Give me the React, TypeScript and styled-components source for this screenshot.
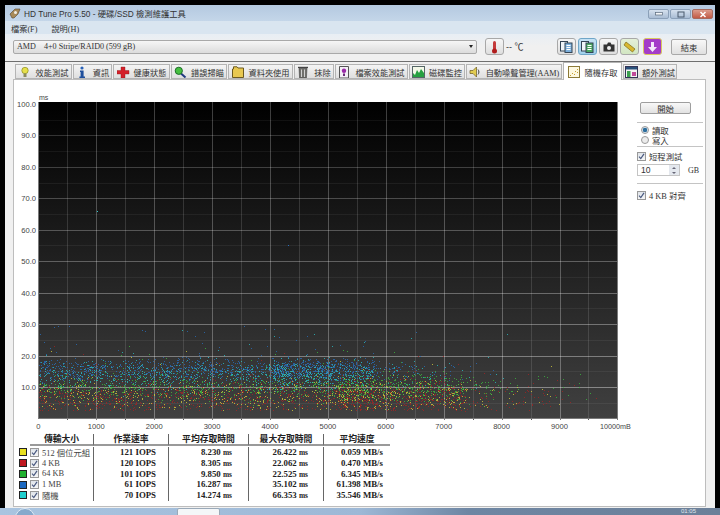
import React from 'react'
import styled, { createGlobalStyle } from 'styled-components'

const SANS = `"Liberation Sans", "Noto Sans CJK TC", sans-serif`
const SERIF = `"Liberation Serif", "Noto Sans CJK TC", serif`

const GlobalStyle = createGlobalStyle`
  html, body { margin: 0; padding: 0; background: #000; }
  body { font-family: ${SERIF}; }
`

const Screen = styled.div`
  width: 720px;
  height: 515px;
  overflow: hidden;
  display: flex;
  flex-direction: column;
  background: #000;
`
const WindowFrame = styled.div`
  height: 503px;
  margin: 5px 5px 0 5px;
  display: flex;
  flex-direction: column;
  background: #f0f0f0;
`
const TitleBar = styled.div`
  height: 16px;
  display: flex;
  align-items: center;
  padding-left: 4px;
  background: linear-gradient(#b4c9e0, #c4d6e9);
  font: 8.3px ${SANS};
  color: #333;
`
const TitleText = styled.span`
  margin-left: 3px;
  flex: 1;
`
const WindowButtons = styled.div`
  display: flex;
  gap: 1px;
  margin-right: 2px;
  margin-top: 2px;
`
const WindowButton = styled.div<{ $close?: boolean }>`
  width: 21px;
  height: 10px;
  display: flex;
  align-items: center;
  justify-content: center;
  border: 1px solid ${(p) => (p.$close ? '#a56a5e' : '#8ba0b8')};
  border-radius: 2px;
  box-sizing: border-box;
  background: ${(p) =>
    p.$close
      ? 'linear-gradient(#dc9c8c, #c25a45)'
      : 'linear-gradient(#d5e1ee, #a9bdd4)'};
`
const MenuBar = styled.div`
  height: 13px;
  display: flex;
  align-items: center;
  gap: 14px;
  padding-left: 6px;
  background: #d9e5f0;
  font: 8.2px ${SERIF};
  color: #333;
`
const Toolbar = styled.div`
  height: 28px;
  box-sizing: border-box;
  display: flex;
  align-items: center;
  padding: 0 0 2px 8px;
  border-bottom: 1px solid #6f6f6f;
  background: linear-gradient(#e8eef4, #f0f0f0 45%);
`
const Combo = styled.div`
  width: 464px;
  height: 14px;
  flex: none;
  box-sizing: border-box;
  display: flex;
  align-items: center;
  justify-content: space-between;
  padding: 0 3px;
  border: 1px solid #a9a9a9;
  border-radius: 2px;
  background: linear-gradient(#f6f6f6, #dcdcdc);
  font: 8.1px ${SERIF};
  color: #333;
  white-space: pre;
`
const ComboArrow = styled.div`
  width: 0;
  height: 0;
  border-left: 2.5px solid transparent;
  border-right: 2.5px solid transparent;
  border-top: 3px solid #222;
`
const ToolButton = styled.div<{ $bg?: string; $gapLeft?: number; $line?: string }>`
  width: 19px;
  height: 17px;
  margin-left: ${(p) => p.$gapLeft ?? 0}px;
  box-sizing: border-box;
  flex: none;
  display: flex;
  align-items: center;
  justify-content: center;
  border: 1px solid ${(p) => p.$line ?? '#a8a8a8'};
  border-radius: 3px;
  background: ${(p) => p.$bg ?? 'linear-gradient(#f6f6f6, #dedede)'};
`
const Temperature = styled.span`
  width: 51px;
  flex: none;
  margin-left: 2px;
  font: 9px ${SANS};
  color: #333;
`
const ToolGroup = styled.div`
  display: flex;
  flex: none;
  gap: 2px;
`
const ExitButton = styled.div`
  width: 36px;
  height: 16px;
  flex: none;
  margin-left: 9px;
  box-sizing: border-box;
  display: flex;
  align-items: center;
  justify-content: center;
  border: 1px solid #a8a8a8;
  border-radius: 2px;
  background: linear-gradient(#f8f8f8, #e0e0e0);
  font: 8.4px ${SERIF};
  color: #333;
`
const TabStrip = styled.div`
  height: 17px;
  display: flex;
  align-items: flex-end;
  gap: 1px;
  padding-left: 10px;
  position: relative;
  z-index: 1;
`
const Tab = styled.div<{ $w: number; $active?: boolean }>`
  width: ${(p) => p.$w}px;
  height: ${(p) => (p.$active ? 18 : 15)}px;
  margin-bottom: ${(p) => (p.$active ? -1 : 0)}px;
  box-sizing: border-box;
  display: flex;
  align-items: center;
  justify-content: center;
  gap: 4px;
  border: 1px solid #b4b4b4;
  border-bottom: ${(p) => (p.$active ? 'none' : '1px solid #b4b4b4')};
  background: ${(p) => (p.$active ? '#fff' : 'linear-gradient(#f4f4f4, #dfdfdf)')};
  font: 8.2px ${SERIF};
  color: #333;
  white-space: nowrap;
`
const Panel = styled.div`
  height: 428px;
  margin: 0 9px 0 8px;
  box-sizing: border-box;
  display: flex;
  border: 1px solid #bdbdbd;
  background: #fff;
`
const MainColumn = styled.div`
  width: 622px;
  flex: none;
  padding-top: 10px;
`
const ChartSvg = styled.svg`
  display: block;
`
const ResultsTable = styled.div`
  display: grid;
  grid-template-columns: 16px 63px 75px 80px 75px 67px;
  grid-template-rows: 12px 1px repeat(5, 10.75px);
  font: bold 8.8px ${SERIF};
  color: #222;
`
const HeaderCell = styled.div<{ $first?: boolean }>`
  box-sizing: border-box;
  text-align: center;
  line-height: 9px;
  padding-top: 1px;
  border-bottom: 2px solid #9a9a9a;
  border-left: ${(p) => (p.$first ? 'none' : '1px solid #666')};
`
const HeaderGap = styled.div`
  grid-column: 1 / -1;
`
const SwatchCell = styled.div`
  display: flex;
  align-items: center;
  justify-content: center;
  padding-left: 1px;
`
const Swatch = styled.div<{ $c: string }>`
  width: 6px;
  height: 6px;
  border: 1px solid #222;
  background: ${(p) => p.$c};
`
const NameCell = styled.div`
  display: flex;
  align-items: center;
  gap: 3px;
  font: 8.4px ${SERIF};
  color: #444;
  white-space: nowrap;
`
const ValueCell = styled.div<{ $pad: number }>`
  text-align: right;
  line-height: 10.75px;
  padding-right: ${(p) => p.$pad}px;
  border-left: 1px solid #666;
  white-space: nowrap;
`
const Unit = styled.span`
  font-size: 7.4px;
`
const CheckBox = styled.div`
  width: 9px;
  height: 9px;
  flex: none;
  box-sizing: border-box;
  display: flex;
  align-items: center;
  justify-content: center;
  border: 1px solid #999;
  background: linear-gradient(#dfe4ea, #f6f6f6);
`
const SideColumn = styled.div`
  width: 66px;
  margin-left: 1px;
  padding-top: 22px;
  display: flex;
  flex-direction: column;
  font: 8.4px ${SERIF};
  color: #333;
`
const StartButton = styled.div`
  width: 51px;
  height: 12px;
  margin-left: 3px;
  box-sizing: border-box;
  display: flex;
  align-items: center;
  justify-content: center;
  border: 1px solid #9e9e9e;
  border-radius: 2px;
  background: linear-gradient(#f8f8f8, #e2e2e2);
`
const Divider = styled.div<{ $top: number; $bottom: number }>`
  height: 1px;
  margin: ${(p) => p.$top}px 0 ${(p) => p.$bottom}px;
  background: #c4c4c4;
`
const OptionRow = styled.div<{ $indent?: number }>`
  height: 10px;
  display: flex;
  align-items: center;
  gap: 3px;
  padding-left: ${(p) => p.$indent ?? 0}px;
  white-space: nowrap;
`
const Radio = styled.div<{ $on?: boolean }>`
  width: 8px;
  height: 8px;
  flex: none;
  box-sizing: border-box;
  border-radius: 50%;
  border: 1px solid #9a9a9a;
  background: ${(p) => (p.$on ? 'radial-gradient(#2d6f9e 45%, #d5e0ea 60%)' : '#ececec')};
`
const SpinRow = styled.div`
  display: flex;
  align-items: center;
  margin-top: 3px;
`
const SpinInput = styled.div`
  width: 43px;
  height: 12px;
  box-sizing: border-box;
  display: flex;
  align-items: center;
  justify-content: space-between;
  padding-left: 3px;
  border: 1px solid #c4c4c4;
  font: 8.6px ${SANS};
`
const SpinArrows = styled.div`
  width: 10px;
  height: 10px;
  display: flex;
  flex-direction: column;
  align-items: center;
  justify-content: space-around;
  background: #e4e8ee;
`
const SpinArrow = styled.div<{ $down?: boolean }>`
  width: 0;
  height: 0;
  border-left: 2px solid transparent;
  border-right: 2px solid transparent;
  border-${(p) => (p.$down ? 'top' : 'bottom')}: 2px solid #667;
`
const SpinUnit = styled.span`
  margin-left: 8px;
  font: 8px ${SERIF};
`
const Taskbar = styled.div`
  flex: 1;
  display: flex;
  align-items: flex-start;
  overflow: hidden;
  background: linear-gradient(90deg, #a9c4e0, #9db8d6 50%, #6e86a3 65%, #6c8099);
`
const StartOrb = styled.div`
  width: 18px;
  height: 18px;
  margin: 0 0 0 15px;
  flex: none;
  border: 1px solid #dfe9f3;
  border-radius: 50%;
  background: #86a9cc;
`
const ActiveTask = styled.div`
  width: 41px;
  height: 20px;
  margin-left: 142px;
  flex: none;
  border: 1px solid #9aa9b8;
  border-radius: 2px;
  background: #f4f6f8;
`
const Clock = styled.span`
  margin-left: auto;
  margin-right: 24px;
  font: 6px/7px ${SANS};
  color: #e2e8ee;
`

// Plain seeded generator so the scatter is the same every time
const makeRandom = (seed: number) => () => {
  seed = (seed * 1664525 + 1013904223) % 4294967296
  return seed / 4294967296
}

const plot = { x: 24.4, y: 12, w: 579 }
const toX = (mb: number) => plot.x + (mb / 10000) * plot.w
const toY = (ms: number) => 328.4 - ms * 3.144

type Series = {
  color: string
  mean: number
  spread: number
  count: number
  maxMb: number
  tailMb: number
}

const seriesList: Series[] = [
  { color: '#a82024', mean: 7, spread: 2.8, count: 1500, maxMb: 7400, tailMb: 9800 },
  { color: '#d8d23a', mean: 7.4, spread: 2.6, count: 750, maxMb: 7400, tailMb: 9800 },
  { color: '#38c03c', mean: 9.8, spread: 2.2, count: 1100, maxMb: 7400, tailMb: 9800 },
  { color: '#2a70c0', mean: 15.6, spread: 1.8, count: 1300, maxMb: 5800, tailMb: 8600 },
  { color: '#2ac4c8', mean: 13.8, spread: 2.2, count: 900, maxMb: 5800, tailMb: 8600 },
]

const dotPath = (s: Series, seed: number) => {
  const rnd = makeRandom(seed)
  const parts: string[] = []
  for (let i = 0; i < s.count; i++) {
    // most dots sit evenly, the rest thin out towards the tail
    const start = s.maxMb * 0.7
    const mb = rnd() < 0.78 ? rnd() * s.maxMb : start + rnd() * rnd() * (s.tailMb - start)
    let ms = s.mean + (rnd() + rnd() + rnd() + rnd() - 2) * s.spread * 1.7
    if (rnd() < 0.03) ms += rnd() * 14
    if (ms < 2.5) ms = 2.5 + rnd() * 3
    parts.push(`M${Math.round(toX(mb))} ${Math.round(toY(ms))}h1v1h-1z`)
  }
  return parts.join('')
}

const yLabels = [100, 90, 80, 70, 60, 50, 40, 30, 20, 10]
const xLabels = [0, 1000, 2000, 3000, 4000, 5000, 6000, 7000, 8000, 9000]

const ScatterChart = () => (
  <ChartSvg width={622} height={344}>
    <defs>
      <linearGradient id="plotFill" x1="0" y1="0" x2="0" y2="1">
        <stop offset="0" stopColor="#000" />
        <stop offset="1" stopColor="#404040" />
      </linearGradient>
      <linearGradient id="gridMajor" gradientUnits="userSpaceOnUse" x1="0" y1="12" x2="0" y2="330">
        <stop offset="0" stopColor="#3c3c3c" />
        <stop offset="1" stopColor="#7c7c7c" />
      </linearGradient>
      <linearGradient id="gridMinor" gradientUnits="userSpaceOnUse" x1="0" y1="12" x2="0" y2="330">
        <stop offset="0" stopColor="#262626" />
        <stop offset="1" stopColor="#555" />
      </linearGradient>
      <filter id="soften" x="0" y="0" width="100%" height="100%">
        <feGaussianBlur stdDeviation="0.45" />
      </filter>
    </defs>
    <rect x={plot.x} y={plot.y} width={plot.w} height={316} fill="url(#plotFill)" />
    {Array.from({ length: 20 }, (_, i) => {
      const x = Math.round(toX((i + 1) * 500)) + 0.5
      return (
        <line
          key={i}
          x1={x}
          x2={x}
          y1={plot.y}
          y2={330}
          stroke={i % 2 ? 'url(#gridMajor)' : 'url(#gridMinor)'}
        />
      )
    })}
    {Array.from({ length: 19 }, (_, i) => {
      const ms = (i + 1) * 5
      const y = Math.round(toY(ms)) + 0.5
      return (
        <line
          key={i}
          x1={plot.x}
          x2={plot.x + plot.w}
          y1={y}
          y2={y}
          stroke="#fff"
          strokeOpacity={i % 2 ? 0.16 + 0.26 * (1 - ms / 100) : 0.06}
        />
      )
    })}
    <g filter="url(#soften)">
      {seriesList.map((s, i) => (
        <path key={s.color} d={dotPath(s, 77 + i * 1301)} fill={s.color} fillOpacity={0.75} />
      ))}
      <path d={`M${Math.round(toX(1010))} ${Math.round(toY(66))}h1v1h-1z`} fill="#2ac4c8" />
      <path d={`M${Math.round(toX(4310))} ${Math.round(toY(55))}h1v1h-1z`} fill="#2a70c0" />
    </g>
    <path d="M24.500 12.500V329M24.500 328.500H603.500V12" fill="none" stroke="#7a7a7a" />
    <g fontFamily={SANS} fontSize={7.6} fill="#444">
      <text x={25} y={10} fontSize={7}>ms</text>
      {yLabels.map((v) => (
        <text key={v} x={22} y={toY(v) + 3} textAnchor="end">
          {v.toFixed(1)}
        </text>
      ))}
      {xLabels.map((v) => (
        <text key={v} x={toX(v)} y={339} textAnchor="middle">
          {v}
        </text>
      ))}
      <text x={586} y={339} fontSize={7.2}>10000mB</text>
    </g>
  </ChartSvg>
)

const Check = () => (
  <svg width="7" height="7" viewBox="0 0 7 7">
    <path d="M1 3.600 2.800 5.600 6 .8" fill="none" stroke="#4a5a80" strokeWidth="1.200" />
  </svg>
)

const TabIcon = ({ name }: { name: string }) => {
  const shapes: Record<string, React.ReactNode> = {
    bulb: (
      <>
        <circle cx="6" cy="4.500" r="3.200" fill="#e6e04a" stroke="#8a8a20" strokeWidth=".7" />
        <rect x="4.500" y="7.500" width="3" height="3.500" fill="#8a8a60" />
      </>
    ),
    info: (
      <>
        <circle cx="6" cy="2" r="1.600" fill="#2a62b8" />
        <path d="M4 4.500h3.600v6H9V12H3.400v-1.500h1.200V6H4z" fill="#1f4f9c" />
      </>
    ),
    cross: <path d="M4 1h4v3.500h4v3.500H8v4H4V8H0V4.500h4z" fill="#d4202a" stroke="#8a1a1a" strokeWidth=".4" />,
    scan: (
      <>
        <path d="M7 7.500 11.500 11.500" stroke="#203a80" strokeWidth="2" />
        <circle cx="4.800" cy="4.800" r="3.600" fill="#46c040" stroke="#1c6c28" />
      </>
    ),
    folder: <path d="M.5 3V11.500H11.500V2H6L5 .8H1.500V3z" fill="#e8c850" stroke="#6c5a20" />,
    trash: (
      <>
        <path d="M1 1.500h10" stroke="#444" strokeWidth="1.400" />
        <path d="M2 2.500h8L9.400 12H2.600z" fill="#70706c" stroke="#333" strokeWidth=".5" />
        <path d="M4.500 3.500V11M7.500 3.500V11" stroke="#ddd" strokeWidth=".9" />
      </>
    ),
    file: (
      <>
        <path d="M1.500.5h9v11.500h-9z" fill="#f4f0f6" stroke="#555" />
        <circle cx="6" cy="4.800" r="2.200" fill="#9a2aa8" />
        <rect x="5" y="7.500" width="2" height="2.500" fill="#6a2a78" />
      </>
    ),
    monitor: (
      <>
        <rect x=".5" y=".5" width="12" height="11" fill="#f4f8e8" stroke="#566" />
        <path d="M1 11V7l2 2 2-5 2 3 2-4 3 4v4z" fill="#26a040" />
      </>
    ),
    speaker: (
      <>
        <path d="M1 4.500h3L7.500 1v10L4 7.500H1z" fill="#e2cc50" stroke="#6a5a20" strokeWidth=".7" />
        <path d="M9 3.500c1.200 1.500 1.200 3.500 0 5" fill="none" stroke="#444" />
      </>
    ),
    random: (
      <>
        <rect x=".5" y=".5" width="11" height="11" fill="#fdf8e0" stroke="#8c7a38" />
        <path d="M2 9h1v1H2zM4 7h1v1H4zM6 8h1v1H6zM7 5h1v1H7zM9 3h1v1H9zM9 6h1v1H9z" fill="#c8a030" />
      </>
    ),
    extra: (
      <>
        <rect x=".5" y=".5" width="12" height="11" fill="#f4f4f4" stroke="#335" />
        <rect x="1" y="1" width="11" height="2.500" fill="#28507a" />
        <rect x="2" y="5" width="3.500" height="6" fill="#3ca050" />
        <rect x="7" y="6" width="4" height="4" fill="#c04a9a" />
      </>
    ),
  }
  return (
    <svg width="13" height="12" viewBox="0 0 13 12" style={{ flex: 'none' }}>
      {shapes[name]}
    </svg>
  )
}

const tabs = [
  { w: 57, icon: 'bulb', label: '效能測試' },
  { w: 39, icon: 'info', label: '資訊' },
  { w: 57, icon: 'cross', label: '健康狀態' },
  { w: 56, icon: 'scan', label: '錯誤掃瞄' },
  { w: 65, icon: 'folder', label: '資料夾使用' },
  { w: 40, icon: 'trash', label: '抹除' },
  { w: 73, icon: 'file', label: '檔案效能測試' },
  { w: 56, icon: 'monitor', label: '磁碟監控' },
  { w: 96, icon: 'speaker', label: '自動噪聲管理(AAM)' },
  { w: 59, icon: 'random', label: '隨機存取', active: true },
  { w: 54, icon: 'extra', label: '額外測試' },
]

const results = [
  { color: '#e8e020', name: '512 個位元組', iops: '121', avg: '8.230', max: '26.422', speed: '0.059' },
  { color: '#c01820', name: '4 KB', iops: '120', avg: '8.305', max: '22.062', speed: '0.470' },
  { color: '#20b030', name: '64 KB', iops: '101', avg: '9.850', max: '22.525', speed: '6.345' },
  { color: '#1c68c0', name: '1 MB', iops: '61', avg: '16.287', max: '35.102', speed: '61.398' },
  { color: '#20d0d0', name: '隨機', iops: '70', avg: '14.274', max: '66.353', speed: '35.546' },
]

const headers = ['傳輸大小', '作業速率', '平均存取時間', '最大存取時間', '平均速度']

const DocsIcon = ({ fill }: { fill: string }) => (
  <svg width="13" height="12" viewBox="0 0 13 12">
    <rect x=".5" y=".5" width="7" height="9.500" fill="#f0f4f8" stroke="#345" />
    <rect x="5" y="2" width="7" height="9.500" fill={fill} stroke="#345" />
    <path d="M6.500 4.500h4M6.500 6.500h4M6.500 8.500h4" stroke="#fff" />
  </svg>
)

export default function App() {
  return (
    <Screen>
      <GlobalStyle />
      <WindowFrame>
        <TitleBar>
          <svg width="12" height="11" viewBox="0 0 12 11">
            <path d="M1 6 6 1h5L9 6l-4 4H3z" fill="#a88a58" stroke="#54422a" strokeWidth=".6" />
            <circle cx="6.500" cy="4.500" r="1.500" fill="#f2eee4" />
          </svg>
          <TitleText>HD Tune Pro 5.50 - 硬碟/SSD 檢測維護工具</TitleText>
          <WindowButtons>
            <WindowButton>
              <svg width="8" height="4" viewBox="0 0 8 4">
                <rect x=".5" y=".5" width="7" height="2.500" fill="#f4f6f8" stroke="#5a6a7c" strokeWidth=".7" />
              </svg>
            </WindowButton>
            <WindowButton>
              <svg width="8" height="7" viewBox="0 0 8 7">
                <rect x="1" y="1" width="6" height="5" fill="none" stroke="#4a5a6c" />
              </svg>
            </WindowButton>
            <WindowButton $close>
              <svg width="8" height="7" viewBox="0 0 8 7">
                <path d="M1.500 1 6.500 6M6.500 1 1.500 6" stroke="#fff" strokeWidth="1.500" />
              </svg>
            </WindowButton>
          </WindowButtons>
        </TitleBar>
        <MenuBar>
          <span>檔案(F)</span>
          <span>說明(H)</span>
        </MenuBar>
        <Toolbar>
          <Combo>
            <span>AMD    4+0 Stripe/RAID0 (599 gB)</span>
            <ComboArrow />
          </Combo>
          <ToolButton $gapLeft={8}>
            <svg width="7" height="14" viewBox="0 0 7 14">
              <rect x="2" y="1" width="3" height="9" rx="1.500" fill="#c43a3a" />
              <circle cx="3.500" cy="11" r="2.500" fill="#b01c1c" />
            </svg>
          </ToolButton>
          <Temperature>-- ℃</Temperature>
          <ToolGroup>
            <ToolButton>
              <DocsIcon fill="#7db0dc" />
            </ToolButton>
            <ToolButton $bg="linear-gradient(#c6e2f4, #a0d0ea)" $line="#6fa6c8">
              <DocsIcon fill="#4aa860" />
            </ToolButton>
            <ToolButton>
              <svg width="12" height="10" viewBox="0 0 12 10">
                <path d="M.5 2.500H4l1-2h2.500l1 2h3V9.500H.5z" fill="#333" />
                <circle cx="6" cy="6" r="2" fill="#eee" />
              </svg>
            </ToolButton>
            <ToolButton $bg="linear-gradient(#e4f0d8, #d2e6c2)">
              <svg width="13" height="12" viewBox="0 0 13 12">
                <path d="M3 1 12 8 9.500 11 1 4z" fill="#d8b830" stroke="#7c6a18" strokeWidth=".7" />
              </svg>
            </ToolButton>
            <ToolButton $bg="#a43cc8" $line="#d8c860" $gapLeft={2}>
              <svg width="11" height="12" viewBox="0 0 11 12">
                <path d="M4 1h3v5h3l-4.500 5L1 6h3z" fill="#f4e8fa" />
              </svg>
            </ToolButton>
          </ToolGroup>
          <ExitButton>結束</ExitButton>
        </Toolbar>
        <TabStrip>
          {tabs.map((t) => (
            <Tab key={t.label} $w={t.w} $active={t.active}>
              <TabIcon name={t.icon} />
              <span>{t.label}</span>
            </Tab>
          ))}
        </TabStrip>
        <Panel>
          <MainColumn>
            <ScatterChart />
            <ResultsTable>
              <div />
              {headers.map((h, i) => (
                <HeaderCell key={h} $first={i === 0}>
                  {h}
                </HeaderCell>
              ))}
              <HeaderGap />
              {results.map((r) => (
                <React.Fragment key={r.name}>
                  <SwatchCell>
                    <Swatch $c={r.color} />
                  </SwatchCell>
                  <NameCell>
                    <CheckBox>
                      <Check />
                    </CheckBox>
                    {r.name}
                  </NameCell>
                  <ValueCell $pad={12}>{r.iops} IOPS</ValueCell>
                  <ValueCell $pad={16}>
                    {r.avg} <Unit>ms</Unit>
                  </ValueCell>
                  <ValueCell $pad={15}>
                    {r.max} <Unit>ms</Unit>
                  </ValueCell>
                  <ValueCell $pad={7}>{r.speed} MB/s</ValueCell>
                </React.Fragment>
              ))}
            </ResultsTable>
          </MainColumn>
          <SideColumn>
            <StartButton>開始</StartButton>
            <Divider $top={8} $bottom={2} />
            <OptionRow $indent={4}>
              <Radio $on />
              讀取
            </OptionRow>
            <OptionRow $indent={4}>
              <Radio />
              寫入
            </OptionRow>
            <Divider $top={1} $bottom={4} />
            <OptionRow>
              <CheckBox>
                <Check />
              </CheckBox>
              短程測試
            </OptionRow>
            <SpinRow>
              <SpinInput>
                10
                <SpinArrows>
                  <SpinArrow />
                  <SpinArrow $down />
                </SpinArrows>
              </SpinInput>
              <SpinUnit>GB</SpinUnit>
            </SpinRow>
            <Divider $top={7} $bottom={6} />
            <OptionRow>
              <CheckBox>
                <Check />
              </CheckBox>
              4 KB 對齊
            </OptionRow>
          </SideColumn>
        </Panel>
      </WindowFrame>
      <Taskbar>
        <StartOrb />
        <ActiveTask />
        <Clock>01:05</Clock>
      </Taskbar>
    </Screen>
  )
}
